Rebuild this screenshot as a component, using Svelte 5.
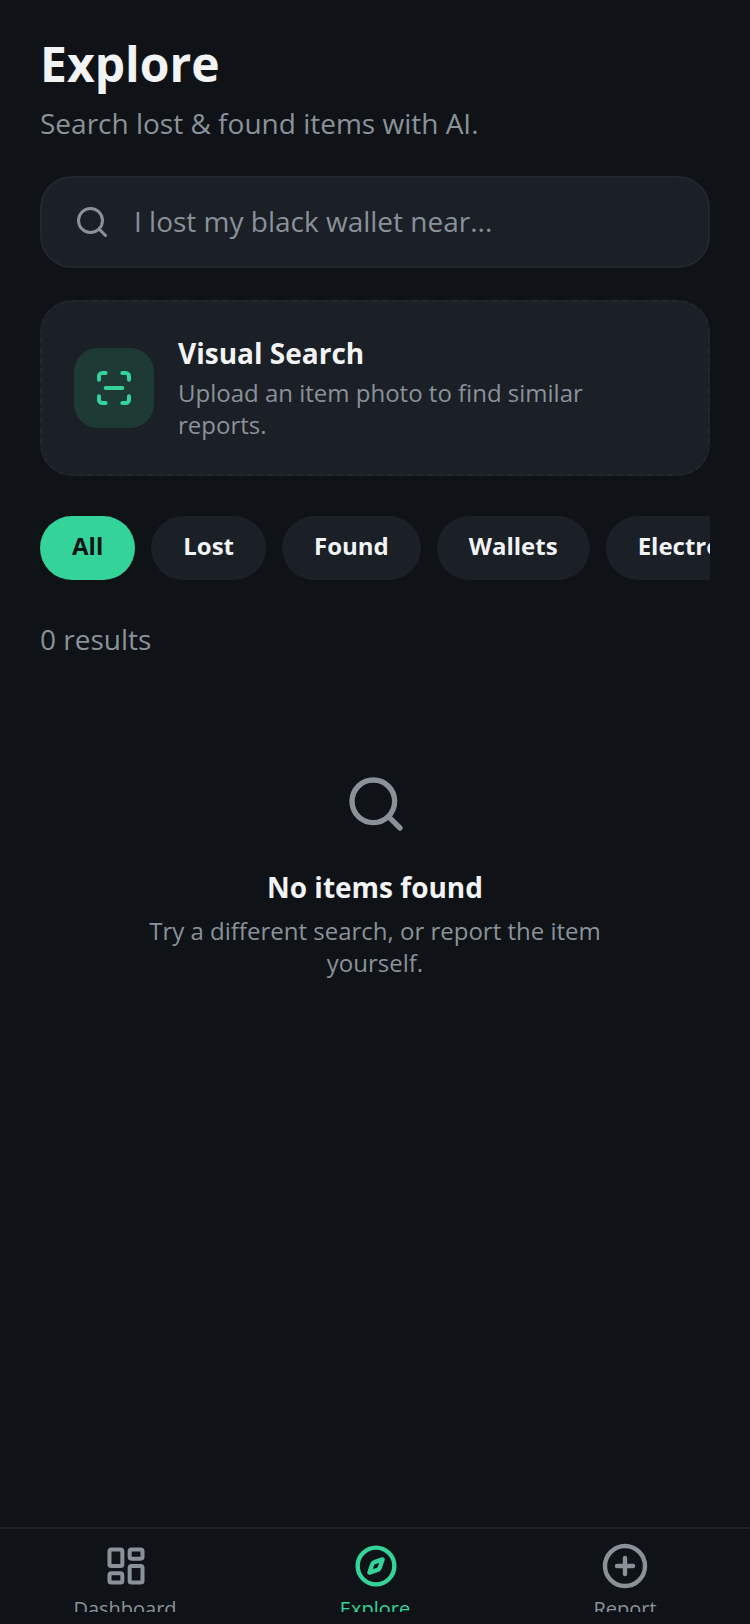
<script>
  const chips = ['All', 'Lost', 'Found', 'Wallets', 'Electronics', 'Keys'];
  let active = $state('All');
</script>

<div class="page">
  <main class="content">
    <h1 class="title">Explore</h1>
    <p class="subtitle">Search lost &amp; found items with AI.</p>

    <div class="search">
      <svg class="search-icon" viewBox="0 0 24 24" fill="none" stroke="currentColor" stroke-width="2" stroke-linecap="round" stroke-linejoin="round">
        <circle cx="11" cy="11" r="8" />
        <path d="m21 21-4.3-4.3" />
      </svg>
      <span class="placeholder">I lost my black wallet near...</span>
    </div>

    <div class="visual">
      <div class="visual-icon">
        <svg viewBox="0 0 24 24" fill="none" stroke="currentColor" stroke-width="2.4" stroke-linecap="round" stroke-linejoin="round">
          <path d="M3 7V5a2 2 0 0 1 2-2h2" />
          <path d="M17 3h2a2 2 0 0 1 2 2v2" />
          <path d="M21 17v2a2 2 0 0 1-2 2h-2" />
          <path d="M7 21H5a2 2 0 0 1-2-2v-2" />
          <path d="M7 12h10" />
        </svg>
      </div>
      <div class="visual-text">
        <div class="visual-title">Visual Search</div>
        <div class="visual-desc">Upload an item photo to find similar reports.</div>
      </div>
    </div>

    <div class="chips">
      {#each chips as chip}
        <button class="chip" class:active={active === chip} onclick={() => (active = chip)}>{chip}</button>
      {/each}
    </div>

    <div class="count">0 results</div>

    <div class="empty">
      <svg class="empty-icon" viewBox="0 0 24 24" fill="none" stroke="currentColor" stroke-width="2" stroke-linecap="round" stroke-linejoin="round">
        <circle cx="11" cy="11" r="8" />
        <path d="m21 21-4.3-4.3" />
      </svg>
      <div class="empty-title">No items found</div>
      <div class="empty-desc">Try a different search, or report the item yourself.</div>
    </div>
  </main>

  <nav class="nav">
    <div class="nav-item">
      <div class="nav-icon">
        <svg class="small" viewBox="0 0 24 24" fill="none" stroke="currentColor" stroke-width="2.2" stroke-linecap="round" stroke-linejoin="round">
          <rect x="3" y="3" width="7" height="9" rx="1" />
          <rect x="14" y="3" width="7" height="5" rx="1" />
          <rect x="14" y="12" width="7" height="9" rx="1" />
          <rect x="3" y="16" width="7" height="5" rx="1" />
        </svg>
      </div>
      <span>Dashboard</span>
    </div>
    <div class="nav-item current">
      <div class="nav-icon">
        <svg class="small" viewBox="0 0 24 24" fill="none" stroke="currentColor" stroke-width="2.4" stroke-linecap="round" stroke-linejoin="round">
          <circle cx="12" cy="12" r="10" />
          <path d="M15.6 8.4l-1.5 4.4a2 2 0 0 1-1.3 1.3l-4.4 1.5 1.5-4.4a2 2 0 0 1 1.3-1.3z" />
        </svg>
      </div>
      <span>Explore</span>
    </div>
    <div class="nav-item">
      <div class="nav-icon">
        <svg viewBox="0 0 24 24" fill="none" stroke="currentColor" stroke-width="2.2" stroke-linecap="round" stroke-linejoin="round">
          <circle cx="12" cy="12" r="10" />
          <path d="M8 12h8" />
          <path d="M12 8v8" />
        </svg>
      </div>
      <span>Report</span>
    </div>
  </nav>
</div>

<style>
  :global(body) {
    margin: 0;
    background: #0f1216;
  }
  .page {
    width: 750px;
    height: 1624px;
    display: flex;
    flex-direction: column;
    overflow: hidden;
    background: #0f1216;
    font-family: "Open Sans", sans-serif;
  }
  .content {
    flex: 1;
    padding: 32px 40px 0;
    min-height: 0;
  }
  .title {
    margin: 0;
    font-size: 48px;
    line-height: 64px;
    font-weight: 700;
    color: #f1f3f4;
  }
  .subtitle {
    margin: 7px 0 0;
    font-size: 28px;
    line-height: 40px;
    color: #8a9299;
  }
  .search {
    margin-top: 33px;
    height: 92px;
    box-sizing: border-box;
    padding: 0 32px;
    display: flex;
    align-items: center;
    gap: 24px;
    background: #1b1f26;
    border: 2px solid #22262d;
    border-radius: 32px;
  }
  .search-icon {
    width: 36px;
    height: 36px;
    color: #8a9299;
    flex: none;
  }
  .placeholder {
    padding-bottom: 2px;
    font-size: 28px;
    color: #8a9299;
  }
  .visual {
    margin-top: 32px;
    box-sizing: border-box;
    height: 176px;
    padding: 0 32px;
    display: flex;
    align-items: center;
    gap: 24px;
    background: #1b1f26;
    border: 2px dashed #22262d;
    border-radius: 32px;
  }
  .visual-icon {
    width: 80px;
    height: 80px;
    border-radius: 24px;
    background: #1d3a34;
    color: #34d399;
    display: flex;
    align-items: center;
    justify-content: center;
    flex: none;
  }
  .visual-icon svg {
    width: 40px;
    height: 40px;
  }
  .visual-text {
    padding-bottom: 2px;
  }
  .visual-title {
    font-size: 28px;
    line-height: 40px;
    font-weight: 700;
    color: #f1f3f4;
  }
  .visual-desc {
    margin-top: 4px;
    font-size: 24px;
    line-height: 32px;
    color: #8a9299;
  }
  .chips {
    margin-top: 40px;
    display: flex;
    gap: 16px;
    overflow: hidden;
  }
  .chip {
    flex: none;
    height: 64px;
    padding: 0 32px 5px;
    border: none;
    border-radius: 32px;
    background: #1b1f26;
    color: #f1f3f4;
    font-family: inherit;
    font-size: 24px;
    font-weight: 700;
  }
  .chip.active {
    background: #34d399;
    color: #0f1216;
  }
  .count {
    margin-top: 39px;
    font-size: 28px;
    line-height: 40px;
    color: #8a9299;
  }
  .empty {
    margin-top: 113px;
    display: flex;
    flex-direction: column;
    align-items: center;
    text-align: center;
    padding: 0 40px;
  }
  .empty-icon {
    width: 64px;
    height: 64px;
    margin-left: 2px;
    color: #8a9299;
  }
  .empty-title {
    margin-top: 31px;
    font-size: 28px;
    line-height: 40px;
    font-weight: 700;
    color: #f1f3f4;
  }
  .empty-desc {
    margin-top: 8px;
    font-size: 24px;
    line-height: 32px;
    color: #8a9299;
    max-width: 480px;
  }
  .nav {
    height: 97px;
    flex: none;
    box-sizing: border-box;
    border-top: 2px solid #1b1f26;
    display: flex;
    justify-content: space-around;
    padding-top: 13px;
    padding-bottom: 12px;
  }
  .nav-item {
    flex: 1;
    display: flex;
    flex-direction: column;
    align-items: center;
    overflow: hidden;
    color: #8a9299;
  }
  .nav-item.current {
    color: #34d399;
  }
  .nav-icon {
    width: 48px;
    height: 48px;
    flex: none;
    display: flex;
    align-items: center;
    justify-content: center;
  }
  .nav-icon svg {
    width: 48px;
    height: 48px;
  }
  .nav-icon svg.small {
    width: 44px;
    height: 44px;
    margin-left: 2px;
  }
  .nav-item span {
    margin-top: 5px;
    font-size: 20px;
    line-height: 28px;
  }
</style>
